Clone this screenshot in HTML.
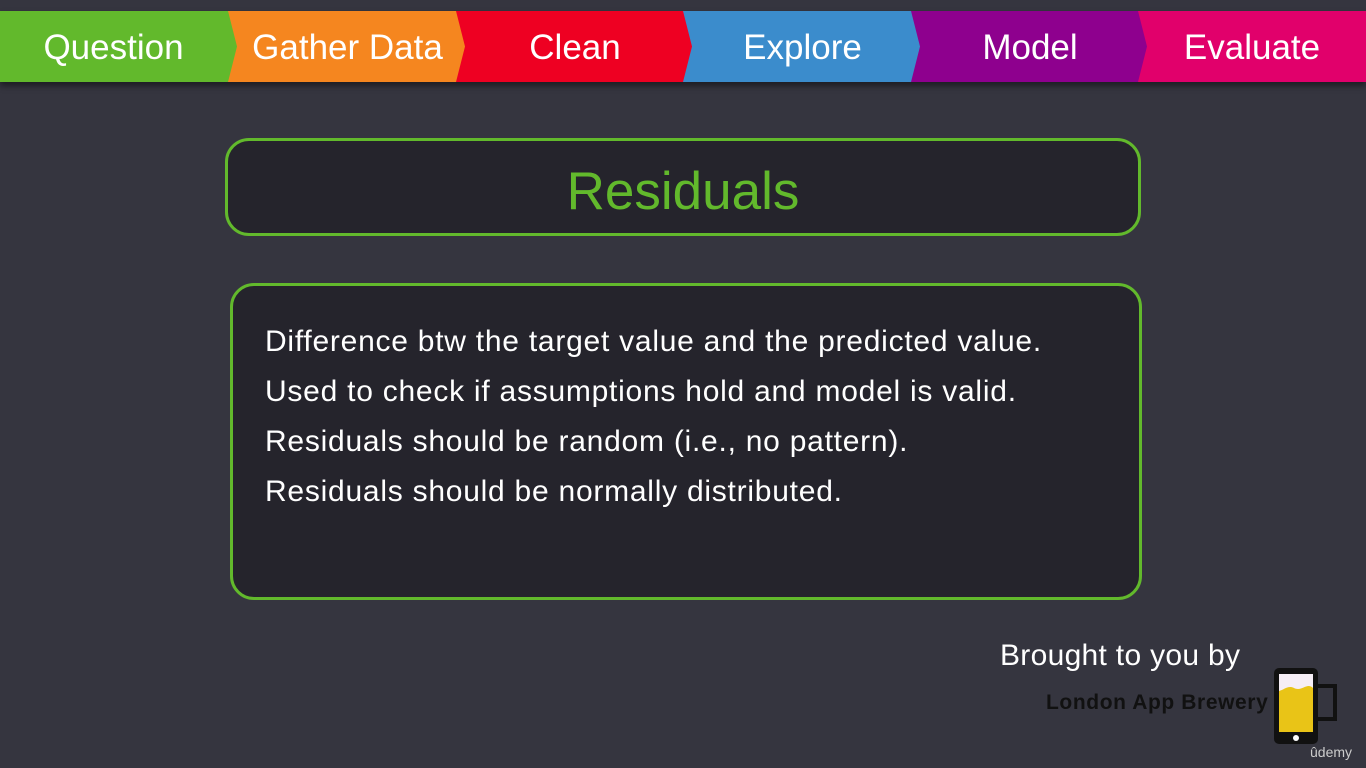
<!DOCTYPE html>
<html><head><meta charset="utf-8"><style>
html,body{margin:0;padding:0;}
body{width:1366px;height:768px;background:#35353f;position:relative;overflow:hidden;font-family:"Liberation Sans",sans-serif;}
.bar{position:absolute;top:11px;left:0;width:1366px;height:71px;box-shadow:0 4px 6px rgba(0,0,0,.45);}
.seg{position:absolute;top:11px;height:71px;color:#fff;font-size:35px;line-height:74px;text-align:center;clip-path:polygon(0 0,calc(100% - 9px) 0,100% 50%,calc(100% - 9px) 100%,0 100%,9px 50%);}
.box{position:absolute;border:3px solid #62b92c;background:#25242c;border-radius:24px;box-sizing:border-box;}
.t{position:absolute;text-align:center;color:#62b92c;font-size:53px;}
.p{position:absolute;left:265px;color:#fff;font-size:30px;letter-spacing:0.75px;}
</style></head><body>
<div class="bar"></div>
<div class="seg" style="left:0;width:239px;background:#62b92c;clip-path:polygon(0 0,230px 0,239px 50%,230px 100%,0 100%);padding-right:12px;box-sizing:border-box;">Question</div>
<div class="seg" style="left:228px;width:239px;background:#f5861f;">Gather Data</div>
<div class="seg" style="left:456px;width:238px;background:#ee0022;">Clean</div>
<div class="seg" style="left:683px;width:239px;background:#3b8ccc;">Explore</div>
<div class="seg" style="left:911px;width:238px;background:#8e008e;">Model</div>
<div class="seg" style="left:1138px;width:228px;background:#e1006b;clip-path:polygon(0 0,100% 0,100% 100%,0 100%,9px 50%);">Evaluate</div>

<div class="box" style="left:225px;top:138px;width:916px;height:98px;"></div>
<div class="t" style="top:161px;left:225px;width:916px;">Residuals</div>

<div class="box" style="left:230px;top:283px;width:912px;height:317px;"></div>
<div class="p" style="top:325px;">Difference btw the target value and the predicted value.</div>
<div class="p" style="top:375px;">Used to check if assumptions hold and model is valid.</div>
<div class="p" style="top:425px;">Residuals should be random (i.e., no pattern).</div>
<div class="p" style="top:475px;">Residuals should be normally distributed.</div>

<div style="position:absolute;left:1000px;top:639px;color:#fff;font-size:30px;letter-spacing:0.3px;">Brought to you by</div>
<div style="position:absolute;left:1046px;top:691px;color:#111;font-size:21px;font-weight:bold;letter-spacing:0.6px;">London App Brewery</div>
<svg style="position:absolute;left:1272px;top:666px" width="70" height="80" viewBox="0 0 70 80">
<rect x="2" y="2" width="44" height="76" rx="5" fill="#111"/>
<path d="M46 20 H63 V53 H46" fill="none" stroke="#111" stroke-width="4"/>
<rect x="7" y="8" width="34" height="58" fill="#e9c417"/>
<path d="M7 8 H41 V22 C35 16 30 26 22 22 C16 19 12 24 7 25 Z" fill="#f6eef6"/>
<circle cx="24" cy="72" r="3" fill="#fff"/>
</svg>
<div style="position:absolute;left:1310px;top:744px;color:#ccc;font-size:14px;">ûdemy</div>
</body></html>
